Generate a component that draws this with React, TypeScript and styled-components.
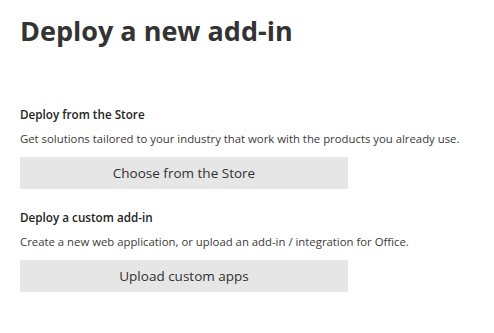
import React from "react";
import styled, { createGlobalStyle } from "styled-components";

const Global = createGlobalStyle`
  html, body { margin: 0; padding: 0; background: #ffffff; }
  body { font-family: "Open Sans", "Noto Sans", sans-serif; color: #323130; }
`;

const Page = styled.div`
  display: flex;
  flex-direction: column;
  padding: 11px 20px 0 20px;
  width: 494px;
  box-sizing: border-box;
`;

const Title = styled.h1`
  margin: 0;
  font-size: 27px;
  line-height: 40px;
  font-weight: 700;
  color: #333333;
`;

const Section = styled.section<{ $top: number }>`
  display: flex;
  flex-direction: column;
  margin-top: ${(p) => p.$top}px;
`;

const Heading = styled.h2`
  margin: 0;
  font-size: 11.7px;
  line-height: 16px;
  font-weight: 600;
  color: #252423;
`;

const Desc = styled.p`
  margin: 9px 0 0 0;
  font-size: 11.35px;
  line-height: 16px;
  font-weight: 400;
  color: #3b3a39;
`;

const Button = styled.button`
  margin-top: 10px;
  width: 328px;
  height: 32px;
  border: none;
  border-radius: 2px;
  background: #e6e6e6;
  color: #323130;
  font-family: inherit;
  font-size: 13.5px;
  font-weight: 400;
  cursor: pointer;
  padding: 0;
`;

export default function App() {
  return (
    <>
      <Global />
      <Page>
        <Title>Deploy a new add-in</Title>
        <Section $top={55}>
          <Heading>Deploy from the Store</Heading>
          <Desc>Get solutions tailored to your industry that work with the products you already use.</Desc>
          <Button>Choose from the Store</Button>
        </Section>
        <Section $top={20}>
          <Heading>Deploy a custom add-in</Heading>
          <Desc>Create a new web application, or upload an add-in / integration for Office.</Desc>
          <Button>Upload custom apps</Button>
        </Section>
      </Page>
    </>
  );
}
